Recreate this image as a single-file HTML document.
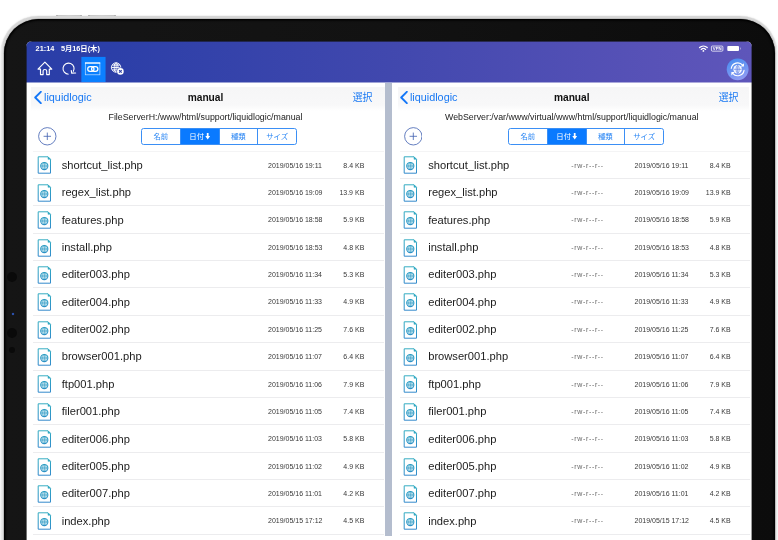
<!DOCTYPE html>
<html lang="ja"><head><meta charset="utf-8"><title>manual</title>
<style>
html,body{margin:0;padding:0;}
body{width:778px;height:540px;overflow:hidden;background:#fff;position:relative;font-family:"Liberation Sans","Noto Sans CJK JP",sans-serif;color:#222;}
.dev{position:absolute;left:1px;top:16.2px;width:776px;height:640px;border-radius:37px;background:linear-gradient(90deg,#ececec,#d6d6d6 3px,#d6d6d6 773px,#ececec);box-shadow:0 0 1.2px rgba(120,120,120,.55);}
.btn{position:absolute;top:15.2px;height:1.4px;border-radius:1px 1px 0 0;background:linear-gradient(90deg,#9a9a9a,#cfcfcf 2.5px,#d8d8d8 50%,#cfcfcf calc(100% - 2.5px),#9a9a9a);}
.bez{position:absolute;left:4.1px;top:18.8px;width:770.9px;height:640px;border-radius:34.5px;background:linear-gradient(90deg,#151515,#121212 50%,#0c0c0c);box-shadow:inset 0 0 2px 1.5px #000,0 0 0 0.8px #b4b4b4;}
.scr{will-change:transform;position:absolute;left:26px;top:41px;width:726px;height:520px;border-radius:6px;background:#fff;overflow:hidden;}
.hdr{position:absolute;left:0;top:0;width:726px;height:42px;z-index:2;background:linear-gradient(90deg,#2a3ea8 0%,#2c3fa8 12%,#4148ae 50%,#5a53b8 90%,#5e56ba 100%);}
.st{position:absolute;top:2.9px;font-size:7.3px;font-weight:bold;color:#fff;line-height:9px;white-space:nowrap;}
.tab{position:absolute;left:55px;top:15.6px;width:24px;height:24.4px;background:#0b80ff;}
.hi{position:absolute;}
.panel{position:absolute;top:40px;height:480px;background:#fff;}
.lp{left:0;width:359px;}
.rp{left:366.5px;width:358.5px;}
.div{position:absolute;left:359px;top:40px;width:6.5px;height:480px;background:#b4bdce;}
.nav{position:absolute;left:0;top:0;width:100%;height:30px;}
.nav:before{content:"";position:absolute;left:5px;right:0;top:6px;bottom:0;background:linear-gradient(180deg,#f6f6f7 0,#f8f8f9 18px,#fff 24px);}
.rp .nav:before{right:2px;}
.chev{position:absolute;left:7.9px;top:9.9px;width:8px;height:13px;}
.back{position:absolute;left:18px;top:8px;font-size:10.85px;line-height:16px;color:#1878f3;}
.title{position:absolute;left:0;width:100%;text-align:center;top:9.3px;font-size:10.2px;line-height:16px;font-weight:bold;color:#111;}
.sel{position:absolute;right:12.6px;top:9.3px;font-size:9.9px;line-height:16px;color:#1878f3;}
.path{position:absolute;left:0;width:100%;top:30.1px;text-align:center;font-size:8.82px;line-height:12px;color:#222;white-space:nowrap;}
.plus{position:absolute;left:12.1px;top:46.2px;width:18.6px;height:18.6px;}
.plus svg{width:18.6px;height:18.6px;display:block;}
.seg{position:absolute;left:115px;top:47px;width:156px;height:17px;box-sizing:border-box;border:0.8px solid #3b8ff5;border-radius:2.6px;display:flex;overflow:hidden;}
.seg span{flex:1;text-align:center;font-size:7.4px;line-height:15.6px;color:#2a86f4;border-left:0.8px solid #3b8ff5;}
.seg span:first-child{border-left:0;}
.seg .on{background:#0a7aff;color:#fff;}
.arr{width:5.4px;height:6.4px;margin-left:0.6px;vertical-align:-0.6px;}
.list{position:absolute;left:7px;right:1.5px;top:69.6px;border-top:0.8px solid #f4f4f5;}
.row{position:relative;height:27.38px;box-sizing:border-box;border-bottom:0.9px solid #ececee;}
.fi{position:absolute;left:3.8px;top:4.9px;width:15.6px;height:18px;}
.nm{position:absolute;left:28.7px;top:6.25px;font-size:11.15px;line-height:14px;color:#1c1c1c;white-space:nowrap;}
.dt,.sz,.pm{position:absolute;top:9px;font-size:7px;line-height:9px;color:#383838;white-space:nowrap;}
.rp .seg{left:115.5px;}
.rp .plus{left:11.3px;}
.rp .back{left:17.4px;}
.lp .chev{left:7.5px;}
.lp .dt{left:235px;}
.lp .sz{right:19.2px;}
.rp .pm{left:171.8px;color:#666;letter-spacing:0.65px;}
.rp .dt{left:235px;}
.rp .sz{right:18.8px;}
</style></head><body>
<svg width="0" height="0" style="position:absolute"><defs>
<linearGradient id="dg" gradientUnits="userSpaceOnUse" x1="0" y1="0" x2="0" y2="18"><stop offset="0" stop-color="#36aec2"/><stop offset="0.5" stop-color="#2a9ac4"/><stop offset="1" stop-color="#3388cc"/></linearGradient>
<g id="doc"><path d="M0.9 0.8H10.7L13.2 3.3V17.2H0.9Z" fill="#fff" stroke="url(#dg)" stroke-width="1" stroke-linejoin="miter"/><path d="M10.7 0.8V3.3H13.2Z" fill="#35aac4" stroke="#35aac4" stroke-width="0.5"/><circle cx="7" cy="10" r="3.6" fill="#d9eff6" stroke="url(#dg)" stroke-width="1.05"/><g stroke="#2b98c2" fill="none"><path d="M7 6.5V13.5M3.5 10H10.5" stroke-width="0.7"/><ellipse cx="7" cy="10" rx="1.85" ry="3.5" stroke-width="0.5"/></g></g>
</defs></svg>
<div class="btn" style="left:56px;width:26px"></div><div class="btn" style="left:88px;width:28px"></div>
<div class="dev"></div>
<div class="bez">
 <div style="position:absolute;left:3.1px;top:253px;width:10px;height:10px;border-radius:50%;background:#0a0a0a"></div>
 <div style="position:absolute;left:8.3px;top:294px;width:2px;height:2.4px;border-radius:50%;background:#2d55b5;box-shadow:0 0 1px #2d55b5"></div>
 <div style="position:absolute;left:3.1px;top:308.8px;width:10px;height:10px;border-radius:50%;background:#0a0a0a"></div>
 <div style="position:absolute;left:5.3px;top:328.5px;width:6px;height:6px;border-radius:50%;background:#0a0a0a"></div>
</div>
<div class="scr">
 <div class="hdr">
  <span class="st" style="left:9.6px">21:14</span><span class="st" style="left:34.9px">5月16日(木)</span>
  <svg class="hi" style="left:0px;top:0px;overflow:visible" width="725" height="41" viewBox="0 0 725 41"><g transform="translate(0.0 0.0)"><rect x="55.35" y="15.9" width="24.2" height="25.1" fill="#0b80ff"/></g></svg>
  <!-- home -->
  <svg class="hi" style="left:10px;top:19px;overflow:visible" width="16" height="15" viewBox="0 0 16 15"><g transform="translate(0.9 0.9)"><path d="M1.1 8.2L8 1.3L14.9 8.2H12.4V13.7H9.8V10.2Q9.8 8.6 8 8.6Q6.2 8.6 6.2 10.2V13.7H3.6V8.2Z" fill="none" stroke="#fff" stroke-width="1.15" stroke-linejoin="round"/></g></svg>
  <!-- refresh -->
  <svg class="hi" style="left:36px;top:21px;overflow:visible" width="15" height="14" viewBox="0 0 15 14"><g transform="translate(0.0 0.1)"><path d="M6.6 12.1A5.55 5.55 0 1 1 11.2 9.6" fill="none" stroke="#fff" stroke-width="1.1"/><path d="M9.3 8.4L9.7 11.1L13.6 10.9" fill="none" stroke="#fff" stroke-width="1.2" stroke-linejoin="round" stroke-linecap="round"/></g></svg>
  <!-- link -->
  <svg class="hi" style="left:58px;top:21px;overflow:visible" width="17" height="14" viewBox="0 0 17 14"><g transform="translate(0.3 0.1)"><rect x="1" y="0.7" width="14.6" height="12" fill="none" stroke="#fff" stroke-opacity=".75" stroke-width="0.7"/><path d="M0.7 1H15.9" stroke="#fff" stroke-width="1.2"/><rect x="3.4" y="4.6" width="6.3" height="4.8" rx="2.4" fill="none" stroke="#fff" stroke-width="1.25"/><rect x="7.3" y="4.6" width="6.3" height="4.8" rx="2.4" fill="none" stroke="#fff" stroke-width="1.25"/></g></svg>
  <!-- globe x -->
  <svg class="hi" style="left:84px;top:20px;overflow:visible" width="16" height="16" viewBox="0 0 16 16"><g transform="translate(0.1 0.5)"><g fill="none" stroke="#fff" stroke-width="0.9"><circle cx="6" cy="6" r="4.7"/><ellipse cx="6" cy="6" rx="2" ry="4.7"/><path d="M1.3 6H10.7M2 3.6H10M2 8.4H10M6 1.3V10.7"/></g><circle cx="10.3" cy="9.9" r="3.9" fill="#2b3fa6"/><circle cx="10.3" cy="9.9" r="3.3" fill="#fff"/><path d="M9 8.6L11.6 11.2M11.6 8.6L9 11.2" stroke="#2b3fa6" stroke-width="1.1"/></g></svg>
  <!-- wifi -->
  <svg class="hi" style="left:672px;top:4px;overflow:visible" width="9" height="7" viewBox="0 0 9 7"><g transform="translate(0.9 0.1)"><g fill="none" stroke="#fff" stroke-linecap="round"><path d="M0.7 2.5A5.6 5.6 0 0 1 8.3 2.5" stroke-width="1.35"/><path d="M2.3 4.3A3.3 3.3 0 0 1 6.7 4.3" stroke-width="1.35"/></g><circle cx="4.5" cy="5.8" r="0.9" fill="#fff"/></g></svg>
  <!-- vpn -->
  <svg class="hi" style="left:684px;top:4px;overflow:visible" width="14" height="8" viewBox="0 0 14 8"><g transform="translate(0.65 0.2)"><rect x="0.75" y="0.85" width="11.5" height="5.1" rx="1" fill="none" stroke="#fff" stroke-width="0.75"/><text x="6.5" y="5" font-family="Liberation Sans, sans-serif" font-size="4.3" font-weight="bold" fill="#fff" text-anchor="middle" letter-spacing="-0.1">VPN</text></g></svg>
  <!-- battery -->
  <svg class="hi" style="left:700px;top:4px;overflow:visible" width="18" height="8" viewBox="0 0 18 8"><g transform="translate(0.0 0.0)"><rect x="1.3" y="1.1" width="11.7" height="4.8" rx="0.9" fill="#fff"/><rect x="14" y="2.4" width="0.9" height="2.2" rx="0.4" fill="#fff" fill-opacity=".45"/></g></svg>
  <!-- sync -->
  <svg class="hi" style="left:700px;top:17px;overflow:visible" width="22" height="22" viewBox="0 0 22 22"><g transform="translate(0.65 0.3)"><defs><linearGradient id="sg" x1="0.3" y1="0" x2="0.7" y2="1"><stop offset="0" stop-color="#4a8ef0"/><stop offset="1" stop-color="#929cf3"/></linearGradient></defs><circle cx="11" cy="11" r="10.9" fill="url(#sg)"/><g fill="none" stroke="#fff" stroke-width="1.15" stroke-linecap="round"><path d="M4.6 10A6.5 6.5 0 0 1 16 6.9"/><path d="M17.4 12A6.5 6.5 0 0 1 6 15.1"/></g><path d="M17.3 4.9V8.3H13.9Z M4.7 17.1V13.7H8.1Z" fill="#fff"/><circle cx="11" cy="11" r="4.3" fill="#f6f8ff"/><g stroke="#5f7fe4" stroke-width="0.7" fill="none"><ellipse cx="11" cy="11" rx="1.6" ry="3.9"/><path d="M7 11H15M11 7V15"/></g></g></svg>
 </div>
 <div style="position:absolute;left:0;top:41px;width:726px;height:1px;background:rgba(255,255,255,.5);z-index:3"></div>
 <div style="position:absolute;left:0;top:0;width:726px;height:1px;background:rgba(18,18,18,.6);z-index:3"></div>
 <div style="position:absolute;left:0;top:0;width:1px;height:520px;background:rgba(20,20,20,.6);z-index:3"></div>
 <div style="position:absolute;left:725px;top:0;width:1px;height:520px;background:rgba(12,12,12,.4);z-index:3"></div>
 <div class="panel lp">
<div class="nav"><svg class="chev" viewBox="0 0 8 13"><path d="M6.8 0.8 L1.2 6.5 L6.8 12.2" fill="none" stroke="#1477f8" stroke-width="1.9" stroke-linecap="round" stroke-linejoin="round"/></svg><span class="back">liquidlogic</span><span class="title">manual</span><span class="sel">選択</span></div>
<div class="path">FileServerH:/www/html/support/liquidlogic/manual</div>
<div class="plus"><svg viewBox="0 0 18 18"><circle cx="9" cy="9" r="8.4" fill="none" stroke="#4463b3" stroke-width="0.8"/><path d="M5.4 9H12.6M9 5.4V12.6" stroke="#4463b3" stroke-width="0.8" fill="none"/></svg></div>
<div class="seg"><span>名前</span><span class="on">日付<svg class="arr" viewBox="0 0 6 8"><path d="M1.9 0h2.2v3.8h1.9L3 8 0 3.8h1.9z" fill="#fff"/></svg></span><span>種類</span><span>サイズ</span></div>
<div class="list">
<div class="row"><svg class="fi" viewBox="0 0 15 18"><use href="#doc"/></svg><span class="nm">shortcut_list.php</span><span class="dt">2019/05/16 19:11</span><span class="sz">8.4 KB</span></div>
<div class="row"><svg class="fi" viewBox="0 0 15 18"><use href="#doc"/></svg><span class="nm">regex_list.php</span><span class="dt">2019/05/16 19:09</span><span class="sz">13.9 KB</span></div>
<div class="row"><svg class="fi" viewBox="0 0 15 18"><use href="#doc"/></svg><span class="nm">features.php</span><span class="dt">2019/05/16 18:58</span><span class="sz">5.9 KB</span></div>
<div class="row"><svg class="fi" viewBox="0 0 15 18"><use href="#doc"/></svg><span class="nm">install.php</span><span class="dt">2019/05/16 18:53</span><span class="sz">4.8 KB</span></div>
<div class="row"><svg class="fi" viewBox="0 0 15 18"><use href="#doc"/></svg><span class="nm">editer003.php</span><span class="dt">2019/05/16 11:34</span><span class="sz">5.3 KB</span></div>
<div class="row"><svg class="fi" viewBox="0 0 15 18"><use href="#doc"/></svg><span class="nm">editer004.php</span><span class="dt">2019/05/16 11:33</span><span class="sz">4.9 KB</span></div>
<div class="row"><svg class="fi" viewBox="0 0 15 18"><use href="#doc"/></svg><span class="nm">editer002.php</span><span class="dt">2019/05/16 11:25</span><span class="sz">7.6 KB</span></div>
<div class="row"><svg class="fi" viewBox="0 0 15 18"><use href="#doc"/></svg><span class="nm">browser001.php</span><span class="dt">2019/05/16 11:07</span><span class="sz">6.4 KB</span></div>
<div class="row"><svg class="fi" viewBox="0 0 15 18"><use href="#doc"/></svg><span class="nm">ftp001.php</span><span class="dt">2019/05/16 11:06</span><span class="sz">7.9 KB</span></div>
<div class="row"><svg class="fi" viewBox="0 0 15 18"><use href="#doc"/></svg><span class="nm">filer001.php</span><span class="dt">2019/05/16 11:05</span><span class="sz">7.4 KB</span></div>
<div class="row"><svg class="fi" viewBox="0 0 15 18"><use href="#doc"/></svg><span class="nm">editer006.php</span><span class="dt">2019/05/16 11:03</span><span class="sz">5.8 KB</span></div>
<div class="row"><svg class="fi" viewBox="0 0 15 18"><use href="#doc"/></svg><span class="nm">editer005.php</span><span class="dt">2019/05/16 11:02</span><span class="sz">4.9 KB</span></div>
<div class="row"><svg class="fi" viewBox="0 0 15 18"><use href="#doc"/></svg><span class="nm">editer007.php</span><span class="dt">2019/05/16 11:01</span><span class="sz">4.2 KB</span></div>
<div class="row"><svg class="fi" viewBox="0 0 15 18"><use href="#doc"/></svg><span class="nm">index.php</span><span class="dt">2019/05/15 17:12</span><span class="sz">4.5 KB</span></div>
<div class="row"></div>
</div></div>
 <div class="div"></div>
 <div class="panel rp">
<div class="nav"><svg class="chev" viewBox="0 0 8 13"><path d="M6.8 0.8 L1.2 6.5 L6.8 12.2" fill="none" stroke="#1477f8" stroke-width="1.9" stroke-linecap="round" stroke-linejoin="round"/></svg><span class="back">liquidlogic</span><span class="title">manual</span><span class="sel">選択</span></div>
<div class="path">WebServer:/var/www/virtual/www/html/support/liquidlogic/manual</div>
<div class="plus"><svg viewBox="0 0 18 18"><circle cx="9" cy="9" r="8.4" fill="none" stroke="#4463b3" stroke-width="0.8"/><path d="M5.4 9H12.6M9 5.4V12.6" stroke="#4463b3" stroke-width="0.8" fill="none"/></svg></div>
<div class="seg"><span>名前</span><span class="on">日付<svg class="arr" viewBox="0 0 6 8"><path d="M1.9 0h2.2v3.8h1.9L3 8 0 3.8h1.9z" fill="#fff"/></svg></span><span>種類</span><span>サイズ</span></div>
<div class="list">
<div class="row"><svg class="fi" viewBox="0 0 15 18"><use href="#doc"/></svg><span class="nm">shortcut_list.php</span><span class="pm">-rw-r--r--</span><span class="dt">2019/05/16 19:11</span><span class="sz">8.4 KB</span></div>
<div class="row"><svg class="fi" viewBox="0 0 15 18"><use href="#doc"/></svg><span class="nm">regex_list.php</span><span class="pm">-rw-r--r--</span><span class="dt">2019/05/16 19:09</span><span class="sz">13.9 KB</span></div>
<div class="row"><svg class="fi" viewBox="0 0 15 18"><use href="#doc"/></svg><span class="nm">features.php</span><span class="pm">-rw-r--r--</span><span class="dt">2019/05/16 18:58</span><span class="sz">5.9 KB</span></div>
<div class="row"><svg class="fi" viewBox="0 0 15 18"><use href="#doc"/></svg><span class="nm">install.php</span><span class="pm">-rw-r--r--</span><span class="dt">2019/05/16 18:53</span><span class="sz">4.8 KB</span></div>
<div class="row"><svg class="fi" viewBox="0 0 15 18"><use href="#doc"/></svg><span class="nm">editer003.php</span><span class="pm">-rw-r--r--</span><span class="dt">2019/05/16 11:34</span><span class="sz">5.3 KB</span></div>
<div class="row"><svg class="fi" viewBox="0 0 15 18"><use href="#doc"/></svg><span class="nm">editer004.php</span><span class="pm">-rw-r--r--</span><span class="dt">2019/05/16 11:33</span><span class="sz">4.9 KB</span></div>
<div class="row"><svg class="fi" viewBox="0 0 15 18"><use href="#doc"/></svg><span class="nm">editer002.php</span><span class="pm">-rw-r--r--</span><span class="dt">2019/05/16 11:25</span><span class="sz">7.6 KB</span></div>
<div class="row"><svg class="fi" viewBox="0 0 15 18"><use href="#doc"/></svg><span class="nm">browser001.php</span><span class="pm">-rw-r--r--</span><span class="dt">2019/05/16 11:07</span><span class="sz">6.4 KB</span></div>
<div class="row"><svg class="fi" viewBox="0 0 15 18"><use href="#doc"/></svg><span class="nm">ftp001.php</span><span class="pm">-rw-r--r--</span><span class="dt">2019/05/16 11:06</span><span class="sz">7.9 KB</span></div>
<div class="row"><svg class="fi" viewBox="0 0 15 18"><use href="#doc"/></svg><span class="nm">filer001.php</span><span class="pm">-rw-r--r--</span><span class="dt">2019/05/16 11:05</span><span class="sz">7.4 KB</span></div>
<div class="row"><svg class="fi" viewBox="0 0 15 18"><use href="#doc"/></svg><span class="nm">editer006.php</span><span class="pm">-rw-r--r--</span><span class="dt">2019/05/16 11:03</span><span class="sz">5.8 KB</span></div>
<div class="row"><svg class="fi" viewBox="0 0 15 18"><use href="#doc"/></svg><span class="nm">editer005.php</span><span class="pm">-rw-r--r--</span><span class="dt">2019/05/16 11:02</span><span class="sz">4.9 KB</span></div>
<div class="row"><svg class="fi" viewBox="0 0 15 18"><use href="#doc"/></svg><span class="nm">editer007.php</span><span class="pm">-rw-r--r--</span><span class="dt">2019/05/16 11:01</span><span class="sz">4.2 KB</span></div>
<div class="row"><svg class="fi" viewBox="0 0 15 18"><use href="#doc"/></svg><span class="nm">index.php</span><span class="pm">-rw-r--r--</span><span class="dt">2019/05/15 17:12</span><span class="sz">4.5 KB</span></div>
<div class="row"></div>
</div></div>
 <div style="position:absolute;left:1px;top:495px;width:724px;height:30px;background:#fff;z-index:1"></div>
</div>
</body></html>
